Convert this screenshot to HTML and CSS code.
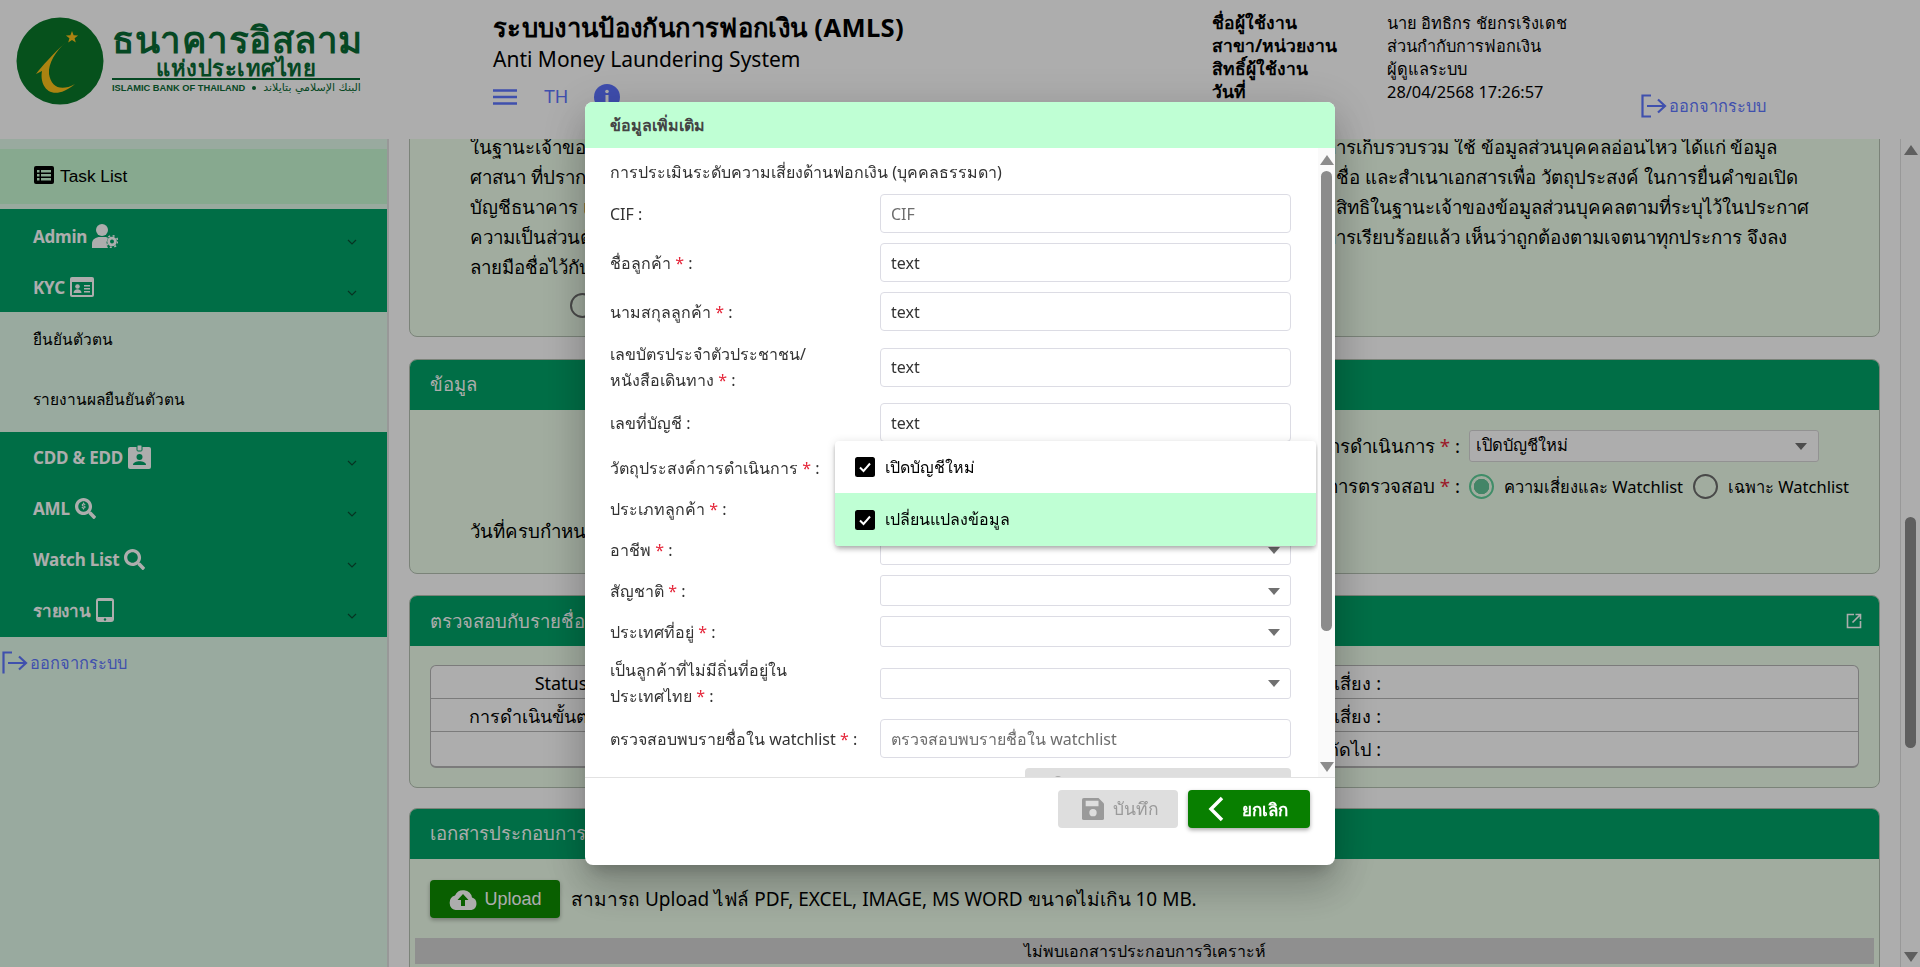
FILE: index.html
```html
<!DOCTYPE html>
<html lang="th">
<head>
<meta charset="utf-8">
<title>AMLS</title>
<link rel="stylesheet" href="styles.css">
</head>
<body>
<div class="app">
  <header class="topbar">
    <div class="brand">
      <svg class="brand-mark" viewBox="0 0 88 88"><circle cx="44" cy="44" r="43.5" fill="#09782a"/><path d="M50 25C36 38 26 49 20 57l6-3c-3 15 9 33 33 13-14 8-24 3-26-10-1-11 7-23 17-32z" fill="#fdc21a"/><path d="M56 14l1.600 4.200 4.500.2-3.500 2.800 1.200 4.300-3.800-2.500-3.800 2.500 1.200-4.300-3.500-2.800 4.500-.2z" fill="#fdc21a"/></svg>
      <div class="brand-text">
        <div class="brand-th">ธนาคารอิสลาม</div>
        <div class="brand-sub">แห่งประเทศไทย</div>
        <div class="brand-en"><span>ISLAMIC BANK OF THAILAND</span><i class="brand-dot"></i><span class="brand-ar" dir="rtl">البنك الإسلامي بتايلاند</span></div>
      </div>
    </div>
    <div class="system">
      <div class="system-th">ระบบงานป้องกันการฟอกเงิน (AMLS)</div>
      <div class="system-en">Anti Money Laundering System</div>
      <div class="system-tools">
        <svg class="burger" viewBox="0 0 24 16"><path d="M0 1.500h24M0 8h24M0 14.500h24" stroke="#5e76ff" stroke-width="2.400"/></svg>
        <span class="lang">TH</span>
        <svg class="info" viewBox="0 0 26 26"><circle cx="13" cy="13" r="13" fill="#5c72ff"/><rect x="11.500" y="11" width="3" height="9" fill="#fff"/><circle cx="13" cy="7.500" r="1.800" fill="#fff"/></svg>
      </div>
    </div>
    <dl class="user">
      <dt>ชื่อผู้ใช้งาน</dt><dd>นาย อิทธิกร ชัยกรเริงเดช</dd>
      <dt>สาขา/หน่วยงาน</dt><dd>ส่วนกำกับการฟอกเงิน</dd>
      <dt>สิทธิ์ผู้ใช้งาน</dt><dd>ผู้ดูแลระบบ</dd>
      <dt>วันที่</dt><dd>28/04/2568 17:26:57</dd>
    </dl>
    <a class="logout logout-top"><svg viewBox="0 0 26 24"><path d="M10 1.500H1.500v21H10M6 12h18M17 5.500l7 6.500-7 6.500" fill="none" stroke="#5e76ff" stroke-width="2.200"/></svg>ออกจากระบบ</a>
  </header>

  <div class="workspace">
    <aside class="sidebar">
      <div class="task"><svg viewBox="0 0 20 18"><rect width="20" height="18" rx="2" fill="#000"/><path d="M3 4h2.500v2.500H3zM7 4h10v2.500H7zM3 8h2.500v2.500H3zM7 8h10v2.500H7zM3 12h2.500v2.500H3zM7 12h10v2.500H7z" fill="#c7f9d3"/></svg>Task List</div>
      <div class="nav-group">
        <div class="nav-item"><span class="nav-label">Admin<svg class="ic ic-admin" viewBox="0 0 26 24"><circle cx="10" cy="6" r="6" fill="#fff"/><path d="M0 24v-4c0-5 4-7 8-7h5c1 0 2 0 3 1-2 3-2 7 0 10z" fill="#fff"/><circle cx="20" cy="17.500" r="4.800" fill="#fff"/><circle cx="20" cy="17.500" r="5.800" fill="none" stroke="#fff" stroke-width="1.600" stroke-dasharray="2 2.550"/><circle cx="20" cy="17.500" r="2" fill="#00a368"/></svg></span><svg class="chev" viewBox="0 0 10 6"><path d="M1 1l4 4 4-4" fill="none" stroke="#0a4d33" stroke-width="1.200"/></svg></div>
        <div class="nav-item"><span class="nav-label">KYC<svg class="ic ic-kyc" viewBox="0 0 24 20"><rect width="24" height="20" rx="2" fill="#fff"/><rect x="2" y="5" width="20" height="13" fill="#00a368"/><circle cx="7.500" cy="9.500" r="2.300" fill="#fff"/><path d="M3.500 16c0-5 8-5 8 0zM14 8h6v1.500h-6zM14 11h6v1.500h-6zM14 14h6v1.500h-6z" fill="#fff"/></svg></span><svg class="chev" viewBox="0 0 10 6"><path d="M1 1l4 4 4-4" fill="none" stroke="#0a4d33" stroke-width="1.200"/></svg></div>
      </div>
      <div class="nav-sub">ยืนยันตัวตน</div>
      <div class="nav-sub">รายงานผลยืนยันตัวตน</div>
      <div class="nav-group nav-group-b">
        <div class="nav-item"><span class="nav-label">CDD &amp; EDD<svg class="ic ic-cdd" viewBox="0 0 23 24"><rect y="2" width="23" height="22" rx="2" fill="#fff"/><rect x="9" width="5" height="6" rx="1" fill="#fff" stroke="#00a368"/><circle cx="11.500" cy="12" r="3" fill="#00a368"/><path d="M5 20c0-5 13-5 13 0z" fill="#00a368"/></svg></span><svg class="chev" viewBox="0 0 10 6"><path d="M1 1l4 4 4-4" fill="none" stroke="#0a4d33" stroke-width="1.200"/></svg></div>
        <div class="nav-item"><span class="nav-label">AML<svg class="ic ic-aml" viewBox="0 0 512 512"><path fill="#fff" d="M505 442.700L405.300 343c-4.500-4.500-10.600-7-17-7H372c27.600-35.300 44-79.700 44-128C416 93.100 322.900 0 208 0S0 93.100 0 208s93.100 208 208 208c48.300 0 92.700-16.400 128-44v16.300c0 6.400 2.500 12.500 7 17l99.700 99.700c9.400 9.400 24.600 9.400 33.900 0l28.300-28.300c9.400-9.400 9.400-24.600.1-34zM208 336c-70.700 0-128-57.200-128-128 0-70.700 57.200-128 128-128 70.700 0 128 57.200 128 128 0 70.700-57.200 128-128 128z"/><path fill="#fff" d="M196 110h24v24c18 2 32 12 36 28l-24 8c-3-9-12-14-24-14-11 0-18 5-18 13 0 20 68 8 68 50 0 20-14 33-38 36v25h-24v-25c-20-3-34-14-38-32l24-7c3 11 14 18 28 18 13 0 22-6 22-15 0-22-68-9-68-50 0-19 14-32 32-35z"/></svg></span><svg class="chev" viewBox="0 0 10 6"><path d="M1 1l4 4 4-4" fill="none" stroke="#0a4d33" stroke-width="1.200"/></svg></div>
        <div class="nav-item"><span class="nav-label">Watch List<svg class="ic ic-aml" viewBox="0 0 512 512"><path fill="#fff" d="M505 442.700L405.300 343c-4.500-4.500-10.600-7-17-7H372c27.600-35.300 44-79.700 44-128C416 93.100 322.900 0 208 0S0 93.100 0 208s93.100 208 208 208c48.300 0 92.700-16.400 128-44v16.300c0 6.400 2.500 12.500 7 17l99.700 99.700c9.400 9.400 24.600 9.400 33.900 0l28.300-28.300c9.400-9.400 9.400-24.600.1-34zM208 336c-70.700 0-128-57.200-128-128 0-70.700 57.200-128 128-128 70.700 0 128 57.200 128 128 0 70.700-57.200 128-128 128z"/></svg></span><svg class="chev" viewBox="0 0 10 6"><path d="M1 1l4 4 4-4" fill="none" stroke="#0a4d33" stroke-width="1.200"/></svg></div>
        <div class="nav-item"><span class="nav-label">รายงาน<svg class="ic ic-tab" viewBox="0 0 18 24"><rect width="18" height="24" rx="3" fill="#fff"/><rect x="2" y="3" width="14" height="16" fill="#00a368"/><circle cx="9" cy="21.500" r="1.200" fill="#00a368"/></svg></span><svg class="chev" viewBox="0 0 10 6"><path d="M1 1l4 4 4-4" fill="none" stroke="#0a4d33" stroke-width="1.200"/></svg></div>
      </div>
      <a class="logout logout-side"><svg viewBox="0 0 26 24"><path d="M10 1.500H1.500v21M6 12h18M17 5.500l7 6.500-7 6.500" fill="none" stroke="#5e76ff" stroke-width="2.200"/></svg>ออกจากระบบ</a>
    </aside>

    <div class="main">
      <main class="content">
        <section class="card card-consent">
          <div class="consent">
            <span>ในฐานะเจ้าของข้อมูลส่วนบุคคล</span><span class="consent-r consent-shift">การเก็บรวบรวม ใช้ ข้อมูลส่วนบุคคลอ่อนไหว ได้แก่ ข้อมูล</span>
            <span>ศาสนา ที่ปรากฏในบัตรประชาชน</span><span class="consent-r">ชื่อ และสำเนาเอกสารเพื่อ วัตถุประสงค์ ในการยื่นคำขอเปิด</span>
            <span>บัญชีธนาคาร และรับทราบ</span><span class="consent-r">สิทธิในฐานะเจ้าของข้อมูลส่วนบุคคลตามที่ระบุไว้ในประกาศ</span>
            <span>ความเป็นส่วนตัวของธนาคาร</span><span class="consent-r consent-shift">การเรียบร้อยแล้ว เห็นว่าถูกต้องตามเจตนาทุกประการ จึงลง</span>
            <span>ลายมือชื่อไว้กับธนาคาร</span><span></span>
          </div>
          <div class="consent-radio"><i class="radio"></i></div>
        </section>

        <section class="card card-info">
          <h2 class="card-head">ข้อมูล</h2>
          <div class="info-body">
            <div class="info-row">
              <label class="info-label">วัตถุประสงค์การดำเนินการ <b>*</b> :</label>
              <div class="info-select">เปิดบัญชีใหม่<i class="caret"></i></div>
            </div>
            <div class="info-row info-row-radio">
              <label class="info-label">ประเภทการตรวจสอบ <b>*</b> :</label>
              <i class="radio radio-on"></i><span class="radio-text">ความเสี่ยงและ Watchlist</span>
              <i class="radio"></i><span class="radio-text">เฉพาะ Watchlist</span>
            </div>
            <div class="info-due">วันที่ครบกำหนด</div>
          </div>
        </section>

        <section class="card card-check">
          <h2 class="card-head card-head-split">ตรวจสอบกับรายชื่อเฝ้าระวัง<svg class="ext" viewBox="0 0 16 16"><path d="M8 1.500H1.500v13h13V8M6.500 9.500L14 2M9.500 1.500h5v5" fill="none" stroke="#fff" stroke-width="1.600"/></svg></h2>
          <div class="check-table">
            <div class="check-row"><span class="check-l">Status</span><span class="check-r">ระดับความเสี่ยง :</span></div>
            <div class="check-row"><span class="check-l">การดำเนินขั้นตอนต่อไป</span><span class="check-r">คะแนนความเสี่ยง :</span></div>
            <div class="check-row"><span class="check-l"></span><span class="check-r">ขั้นตอนถัดไป :</span></div>
          </div>
        </section>

        <section class="card card-docs">
          <h2 class="card-head">เอกสารประกอบการวิเคราะห์</h2>
          <div class="docs-body">
            <div class="upload-row">
              <button class="upload"><svg viewBox="0 0 30 22"><path d="M24 9.500A9 9 0 0 0 7 7.500 7.500 7.500 0 0 0 7.500 22h16a6.500 6.500 0 0 0 .5-12.500z" fill="#fff"/><path d="M15 6l-5.500 6H13v6h4v-6h3.500z" fill="#0e8c00"/></svg>Upload</button>
              <span>สามารถ Upload ไฟล์ PDF, EXCEL, IMAGE, MS WORD ขนาดไม่เกิน 10 MB.</span>
            </div>
            <div class="docs-empty">ไม่พบเอกสารประกอบการวิเคราะห์</div>
          </div>
        </section>
      </main>
      <div class="rail rail-page">
        <i class="arrow-up"></i>
        <i class="thumb thumb-page"></i>
        <i class="arrow-down arrow-down-page"></i>
      </div>
    </div>
  </div>
</div>

<div class="scrim">
  <div class="dialog" role="dialog">
    <div class="dialog-head">ข้อมูลเพิ่มเติม</div>
    <div class="dialog-body">
      <form class="form">
        <div class="form-title">การประเมินระดับความเสี่ยงด้านฟอกเงิน (บุคคลธรรมดา)</div>
        <div class="row"><label>CIF :</label><input class="field" placeholder="CIF"></div>
        <div class="row"><label>ชื่อลูกค้า <b>*</b> :</label><input class="field" value="text"></div>
        <div class="row"><label>นามสกุลลูกค้า <b>*</b> :</label><input class="field" value="text"></div>
        <div class="row"><label>เลขบัตรประจำตัวประชาชน/<br>หนังสือเดินทาง <b>*</b> :</label><input class="field" value="text"></div>
        <div class="row"><label>เลขที่บัญชี :</label><input class="field" value="text"></div>
        <div class="row"><label>วัตถุประสงค์การดำเนินการ <b>*</b> :</label><div class="pick"><i class="caret"></i></div></div>
        <div class="row"><label>ประเภทลูกค้า <b>*</b> :</label><div class="pick"><i class="caret"></i></div></div>
        <div class="row"><label>อาชีพ <b>*</b> :</label><div class="pick"><i class="caret"></i></div></div>
        <div class="row"><label>สัญชาติ <b>*</b> :</label><div class="pick"><i class="caret"></i></div></div>
        <div class="row"><label>ประเทศที่อยู่ <b>*</b> :</label><div class="pick"><i class="caret"></i></div></div>
        <div class="row"><label>เป็นลูกค้าที่ไม่มีถิ่นที่อยู่ใน<br>ประเทศไทย <b>*</b> :</label><div class="pick"><i class="caret"></i></div></div>
        <div class="row"><label>ตรวจสอบพบรายชื่อใน watchlist <b>*</b> :</label><input class="field" placeholder="ตรวจสอบพบรายชื่อใน watchlist"></div>
        <div class="row-end"><div class="ghost"></div></div>
        <div class="menu">
          <div class="menu-item"><svg class="check" viewBox="0 0 20 20"><rect width="20" height="20" rx="2.500" fill="#000"/><path d="M5 10.500l3.500 3.500L15 6.500" fill="none" stroke="#fff" stroke-width="2"/></svg>เปิดบัญชีใหม่</div>
          <div class="menu-item menu-item-on"><svg class="check" viewBox="0 0 20 20"><rect width="20" height="20" rx="2.500" fill="#000"/><path d="M5 10.500l3.500 3.500L15 6.500" fill="none" stroke="#fff" stroke-width="2"/></svg>เปลี่ยนแปลงข้อมูล</div>
        </div>
      </form>
      <div class="rail rail-dialog">
        <i class="arrow-up"></i>
        <i class="thumb thumb-dialog"></i>
        <i class="arrow-down"></i>
      </div>
    </div>
    <div class="dialog-foot">
      <button class="btn btn-save"><svg viewBox="0 0 24 24"><path d="M2 0h16l6 6v16a2 2 0 0 1-2 2H2a2 2 0 0 1-2-2V2a2 2 0 0 1 2-2z" fill="#9a9a9a"/><rect x="4" y="3" width="14" height="6" fill="#dedede"/><circle cx="12" cy="16" r="4" fill="#dedede"/></svg>บันทึก</button>
      <button class="btn btn-cancel"><svg viewBox="0 0 16 26"><path d="M14 2L3 13l11 11" fill="none" stroke="#fff" stroke-width="3.500"/></svg>ยกเลิก</button>
    </div>
  </div>
</div>
</body>
</html>
```

FILE: styles.css
```css
* { box-sizing: border-box; }
html, body { margin: 0; height: 100%; overflow: hidden; }
body { font-family: "Noto Sans", "Open Sans", "Liberation Sans", sans-serif; color: #000; background: #fff; font-size: 16px; }
button { font: inherit; border: 0; }
b { font-weight: 400; color: #e5263a; }

.app { height: 967px; display: flex; flex-direction: column; }

/* header */
.topbar { height: 139px; flex: none; display: flex; position: relative; background: #fff; }
.brand { width: 493px; flex: none; display: flex; padding: 17px 0 0 16px; }
.brand-mark { width: 88px; height: 88px; flex: none; }
.brand-text { margin-left: 8px; width: 248px; color: #0a6a34; }
.brand-th { font-size: 36.700px; font-weight: 700; line-height: 36px; margin-top: 4px; letter-spacing: .5px; white-space: nowrap; }
.brand-sub { font-size: 22px; font-weight: 700; line-height: 20px; text-align: center; border-bottom: 2px solid #0a6a34; height: 23px; letter-spacing: .5px; white-space: nowrap; }
.brand-en { display: flex; align-items: center; font: 700 9.300px/14px "Liberation Sans", sans-serif; white-space: nowrap; margin-top: 1px; }
.brand-dot { width: 4px; height: 4px; border-radius: 50%; background: #0a6a34; margin: 0 7px; flex: none; }
.brand-ar { font: 400 11px/14px "DejaVu Sans", sans-serif; }

.system { width: 719px; flex: none; padding-top: 10px; }
.system-th { font-size: 25.600px; font-weight: 700; line-height: 36px; letter-spacing: .35px; white-space: nowrap; }
.system-en { font-size: 21px; line-height: 26px; white-space: nowrap; }
.system-tools { display: flex; align-items: center; margin-top: 12px; }
.burger { width: 24px; height: 16px; }
.lang { font: 400 18px/26px "Liberation Sans", sans-serif; color: #5e76ff; margin: 0 26px 0 27px; }
.info { width: 26px; height: 26px; }

.user { margin: 11px 0 0; display: grid; grid-template-columns: 175px 1fr; grid-auto-rows: 23px; line-height: 23px; width: 429px; flex: none; align-content: start; }
.user dt { font-weight: 700; font-size: 17.500px; white-space: nowrap; }
.user dd { margin: 0; font-size: 16.400px; white-space: nowrap; }

.logout { display: flex; align-items: center; color: #5e76ff; font-size: 16.400px; white-space: nowrap; }
.logout svg { width: 26px; height: 24px; flex: none; margin-right: 2px; }
.logout-top { align-self: flex-start; margin-top: 93px; }
.logout-side { margin: 13px 0 0 2px; }

/* layout */
.workspace { flex: 1; min-height: 0; display: grid; grid-template-columns: 389px 1fr; }
.sidebar { background: #e2fbea; border-right: 2px solid #e0e0e0; padding-top: 10px; overflow: hidden; }
.task { height: 55px; background: #c7f9d3; display: flex; align-items: center; padding: 0 0 2px 34px; font: 400 17.300px/24px "Liberation Sans", sans-serif; }
.task svg { width: 20px; height: 18px; margin-right: 6px; margin-top: -2px; }
.nav-group { background: #00a368; margin-top: 5px; padding-top: 2px; height: 103px; }
.nav-group-b { margin-top: 0; height: 205px; padding-top: 0; }
.nav-item { height: 51px; padding: 0 30px 0 33px; display: flex; justify-content: space-between; position: relative; }
.nav-label { display: flex; align-items: center; height: 50px; color: #fff; font-size: 17px; font-weight: 700; letter-spacing: -.2px; }
.chev { width: 10px; height: 6px; align-self: flex-end; margin-bottom: 17px; }
.ic { margin-left: 5px; flex: none; }
.ic-admin { width: 26px; height: 24px; }
.ic-kyc { width: 24px; height: 20px; }
.ic-cdd { width: 23px; height: 24px; }
.ic-aml { width: 21px; height: 21px; }
.ic-tab { width: 18px; height: 24px; }
.nav-sub { height: 60px; padding-left: 33px; font-size: 15.500px; line-height: 54px; }

/* content */
.main { display: grid; grid-template-columns: 1fr 20px; min-height: 0; }
.content { padding: 0 20px; overflow: hidden; min-width: 0; background: #fff; }
.card { border: 1px solid #b5c2b3; border-radius: 8px; background: #eefeeb; margin-bottom: 21px; overflow: hidden; }
.card-head { margin: 0; height: 50px; background: #00a368; color: #fff; font-size: 18.500px; font-weight: 400; line-height: 48px; padding: 0 20px; white-space: nowrap; }
.card-head-split { display: flex; justify-content: space-between; align-items: center; padding-right: 17px; }
.ext { width: 16px; height: 16px; }

.card-consent { height: 218px; margin-top: -20px; margin-bottom: 22px; padding: 12px 0 0 60px; }
.consent { display: grid; grid-template-columns: 860px 1fr; font-size: 18.700px; line-height: 30px; white-space: nowrap; }
.consent-r { margin-left: 6px; }
.consent-shift { margin-left: -5px; }
.consent-radio { padding: 11px 0 0 100px; }

.radio { width: 25px; height: 25px; border-radius: 50%; border: 2px solid #6c6c6c; flex: none; display: inline-block; background: transparent; }
.radio-on { border-color: #5fd09a; background: radial-gradient(circle, #63c598 0 7.500px, transparent 8px); }
.radio-text { font-size: 16.500px; margin: 0 10px; white-space: nowrap; }

.card-info { height: 215px; margin-bottom: 21px; }
.info-body { padding: 20px 30px 0 60px; }
.info-row { display: flex; align-items: center; margin-left: 581px; height: 32px; }
.info-row-radio { margin-top: 12px; height: 25px; }
.info-label { width: 409px; text-align: right; flex: none; margin-right: 9px; font-size: 18.700px; white-space: nowrap; }
.info-select { width: 350px; height: 32px; background: #fff; border: 1px solid #d8d8d8; border-radius: 3px; padding: 0 6px; line-height: 28px; font-size: 16.500px; position: relative; }
.info-select .caret { right: 11px; }
.info-due { margin-top: 17px; font-size: 18.700px; line-height: 30px; }

.caret { position: absolute; right: 10px; top: 50%; margin-top: -3px; width: 0; height: 0; border-left: 6px solid transparent; border-right: 6px solid transparent; border-top: 7px solid #707070; }

.card-check { height: 193px; margin-bottom: 20px; }
.check-table { margin: 19px 20px 0; border: 1px solid #b5b5b5; border-bottom-width: 2px; border-radius: 6px; background: #fff; height: 103px; }
.check-row { height: 33px; display: grid; grid-template-columns: 260px 1fr; border-bottom: 1px solid #b5b5b5; line-height: 35px; font-size: 18px; }
.check-row:last-child { border-bottom: 0; }
.check-l { white-space: nowrap; justify-self: center; }
.check-r { text-align: right; padding-right: 477px; white-space: nowrap; }

.card-docs { height: 300px; margin-bottom: 0; }
.docs-body { padding: 21px 5px 0; }
.upload-row { display: flex; align-items: center; padding-left: 15px; gap: 11px; font-size: 19px; height: 38px; white-space: nowrap; }
.upload { width: 130px; height: 38px; flex: none; background: #0e8c00; color: #fff; border-radius: 4px; display: flex; align-items: center; justify-content: center; gap: 6px; font: 400 18px/24px "Liberation Sans", sans-serif; box-shadow: 0 2px 4px rgba(0,0,0,.3); }
.upload svg { width: 30px; height: 22px; }
.docs-empty { margin-top: 20px; height: 26px; background: #d3d3d3; text-align: center; line-height: 26px; font-size: 16px; }

/* rails */
.rail { display: flex; flex-direction: column; align-items: center; }
.rail-page { border-left: 1px solid #e0e0e0; background: #fff; padding-top: 6px; }
.arrow-up { width: 0; height: 0; border-left: 7px solid transparent; border-right: 7px solid transparent; border-bottom: 10px solid #8c8c8c; flex: none; }
.arrow-down { width: 0; height: 0; border-left: 7px solid transparent; border-right: 7px solid transparent; border-top: 10px solid #8c8c8c; flex: none; margin-top: 131px; }
.arrow-down-page { margin-top: 204px; }
.thumb { width: 11px; border-radius: 6px; background: #8c8c8c; flex: none; }
.thumb-page { height: 231px; margin-top: 362px; }
.rail-dialog { width: 17px; background: #fafafa; padding-top: 7px; }
.thumb-dialog { height: 460px; margin-top: 6px; }

/* dialog */
.scrim { position: fixed; inset: 0; background: rgba(0,0,0,.32); display: flex; align-items: center; justify-content: center; }
.dialog { width: 750px; height: 763px; background: #fff; border-radius: 8px; display: flex; flex-direction: column; overflow: hidden; box-shadow: 0 11px 15px -7px rgba(0,0,0,.2), 0 24px 38px 3px rgba(0,0,0,.14), 0 9px 46px 8px rgba(0,0,0,.12); }
.dialog-head { height: 46px; flex: none; background: #bfffd4; padding: 0 25px; font-size: 16px; font-weight: 700; line-height: 46px; color: #444; }
.dialog-body { height: 629px; flex: none; display: flex; }
.form { flex: 1; min-width: 0; padding: 0 27px 0 25px; position: relative; overflow: hidden; color: #333; }
.form-title { height: 46px; line-height: 48px; font-size: 16px; white-space: nowrap; }
.row { display: grid; grid-template-columns: 270px 1fr; align-items: center; min-height: 31px; margin-bottom: 10px; }
.row label { line-height: 26px; font-size: 16px; white-space: nowrap; }
.field { height: 39px; width: 100%; border: 1px solid #dcdce4; border-radius: 4px; padding: 0 10px; font: inherit; font-size: 16px; color: #333; background: #fff; }
.field::placeholder { color: #6e6e6e; opacity: 1; }
.pick { height: 31px; border: 1px solid #dcdce4; border-radius: 3px; position: relative; }
.row-end { display: flex; justify-content: flex-end; }
.ghost { width: 266px; height: 40px; background: #dedede; border-radius: 4px; padding: 8px 0 0 28px; }
.ghost::before { content: ""; display: block; width: 10px; height: 10px; border-radius: 50%; background: #a8a8a8; }
.menu { position: absolute; left: 250px; top: 293px; width: 481px; background: #fff; border-radius: 4px; overflow: hidden; box-shadow: 0 2px 4px -1px rgba(0,0,0,.2), 0 4px 5px rgba(0,0,0,.14), 0 1px 10px rgba(0,0,0,.12); }
.menu-item { height: 52px; display: flex; align-items: center; padding-left: 20px; font-size: 16px; color: #000; }
.menu-item-on { height: 53px; background: #bfffd4; }
.check { width: 20px; height: 20px; margin-right: 10px; flex: none; }

.dialog-foot { flex: 1; border-top: 1px solid #e2e2e2; display: flex; justify-content: flex-end; align-items: flex-start; gap: 10px; padding: 12px 25px 0; }
.btn { height: 38px; border-radius: 4px; display: flex; align-items: center; font-size: 17.500px; padding: 0; }
.btn-save { width: 120px; background: #dedede; color: #9a9a9a; padding-left: 23px; }
.btn-save svg { width: 24px; height: 22px; margin-right: 8px; }
.btn-cancel { width: 122px; background: #087f00; color: #fff; font-weight: 700; font-size: 17px; padding-left: 20px; box-shadow: 0 2px 4px rgba(0,0,0,.35); }
.btn-cancel svg { width: 16px; height: 26px; margin-right: 18px; }
```
